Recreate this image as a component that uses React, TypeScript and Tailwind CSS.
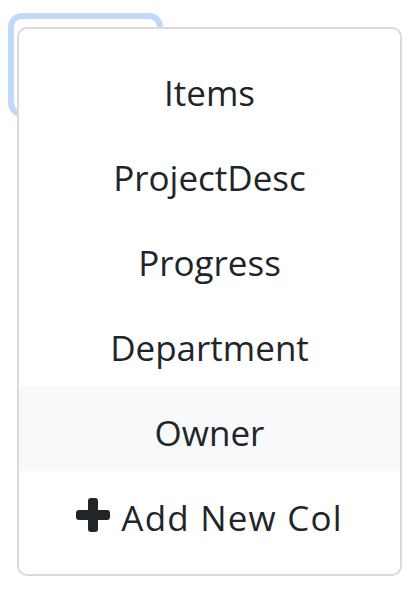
import React from "react";

const items = ["Items", "ProjectDesc", "Progress", "Department", "Owner"];

export default function App() {
  return (
    <div
      className="relative w-[414px] h-[593px] bg-white overflow-hidden"
      style={{ fontFamily: '"Open Sans", "Noto Sans", sans-serif' }}
    >
      <div className="ml-[14px] mt-[19px] w-[143px] h-[92px] rounded-[8px] bg-white shadow-[0_0_0_6px_#bfd9fd]" />
      <div className="absolute left-[17px] top-[27px] w-[385px] h-[549px] rounded-[10px] border-2 border-[#dadada] bg-white py-[17px]">
        {items.map((t) => (
          <div
            key={t}
            className={`h-[85px] pt-[8px] flex items-center justify-center text-[35px] leading-none text-[#212529] ${
              t === "Owner" ? "bg-[#f8f9fa]" : ""
            }`}
          >
            {t}
          </div>
        ))}
        <div className="h-[85px] pt-[8px] flex items-center justify-center text-[35px] leading-none text-[#212529]">
          <svg width="34" height="34" viewBox="0 0 34 34" className="mr-[11px] mt-[-6px]">
            <rect x="12" y="0" width="10" height="34" rx="3" fill="#212529" />
            <rect x="0" y="12" width="34" height="10" rx="3" fill="#212529" />
          </svg>
          <span className="tracking-[1.2px]">Add New Col</span>
        </div>
      </div>
    </div>
  );
}
